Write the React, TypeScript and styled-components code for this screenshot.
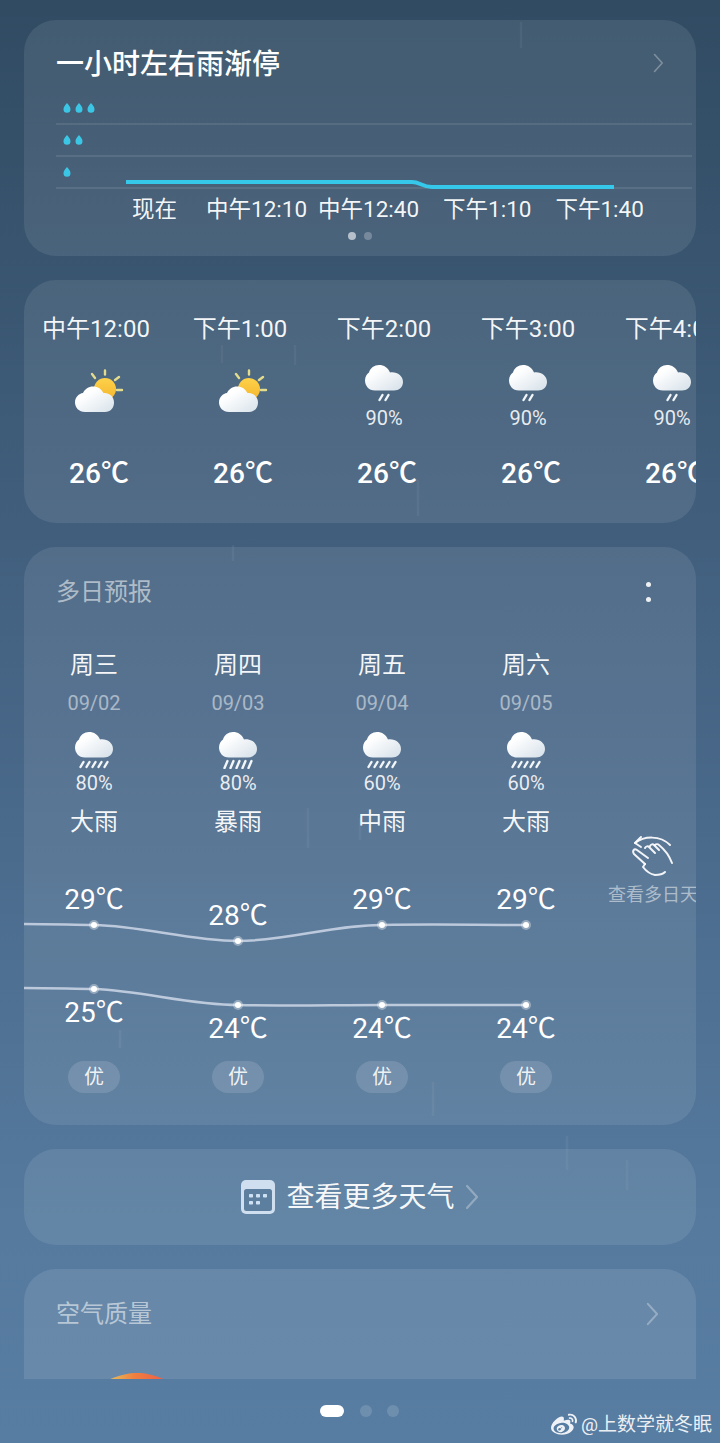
import React from 'react';
import styled, { createGlobalStyle } from 'styled-components';
import { FaWeibo } from 'react-icons/fa';

const GlobalStyle = createGlobalStyle`
  html, body {
    margin: 0;
    padding: 0;
    background: #34506a;
  }
  body {
    font-family: Roboto, "Noto Sans CJK SC", sans-serif;
    color: #fff;
  }
`;

const Page = styled.div`
  position: relative;
  width: 720px;
  height: 1443px;
  overflow: hidden;
  box-sizing: border-box;
  padding-top: 20px;
  display: flex;
  flex-direction: column;
  align-items: center;
  gap: 24px;
  background: linear-gradient(180deg, #304b62 0%, #456383 45%, #557a9e 85%, #587da2 100%);
`;

const Rain = styled.svg`
  position: absolute;
  inset: 0;
  pointer-events: none;
`;

const Card = styled.section`
  position: relative;
  width: 672px;
  flex: none;
  overflow: hidden;
  border-radius: 32px;
  background: rgba(255, 255, 255, 0.09);
`;

const NowCard = styled(Card)`
  height: 236px;
`;

const NowHeader = styled.div`
  display: flex;
  align-items: center;
  justify-content: space-between;
  height: 40px;
  padding: 23px 32px 0;
`;

const NowTitle = styled.h2`
  margin: 3px 0 0;
  font-size: 28px;
  line-height: 40px;
  font-weight: 500;
  color: #fff;
`;

const MinuteChart = styled.svg`
  display: block;
  margin: 17px 0 0 32px;
`;

const MinuteLabels = styled.div`
  display: flex;
  height: 34px;
  margin-top: 2px;
  padding-left: 108px;
`;

const MinuteLabel = styled.span<{ $gap: number }>`
  margin-left: ${(p) => p.$gap}px;
  font-size: 22.5px;
  line-height: 34px;
  white-space: nowrap;
  color: rgba(255, 255, 255, 0.95);
`;

const PageDots = styled.div`
  display: flex;
  justify-content: center;
  gap: 8px;
  margin-top: 6px;
`;

const PageDot = styled.i<{ $on?: boolean }>`
  width: 8px;
  height: 8px;
  border-radius: 50%;
  background: rgba(255, 255, 255, ${(p) => (p.$on ? 0.6 : 0.25)});
`;

const HourCard = styled(Card)`
  height: 243px;
  display: flex;
`;

const HourColumn = styled.div`
  flex: none;
  width: 144px;
  display: flex;
  flex-direction: column;
  align-items: center;
  padding-top: 32px;
`;

const HourLabel = styled.span`
  font-size: 24px;
  line-height: 34px;
  white-space: nowrap;
  color: rgba(255, 255, 255, 0.95);
`;

const HourIconSlot = styled.div`
  height: 86px;
  margin-top: 19px;
  display: flex;
  flex-direction: column;
  align-items: center;
`;

const SunSlot = styled.div`
  margin: 4px 0 0 8px;
`;

const Percent = styled.span<{ $top: number }>`
  margin-top: ${(p) => p.$top}px;
  font-size: 20px;
  line-height: 24px;
  color: rgba(255, 255, 255, 0.88);
`;

const HourTemp = styled.span`
  margin-left: 6px;
  margin-top: 3px;
  font-size: 28px;
  line-height: 40px;
  font-weight: 500;
  white-space: nowrap;
`;

const DailyCard = styled(Card)`
  height: 578px;
`;

const DailyHeader = styled.div`
  display: flex;
  justify-content: space-between;
  align-items: center;
  height: 34px;
  padding: 28px 32px 0;
`;

const MutedTitle = styled.h3`
  margin: 0;
  font-size: 24px;
  line-height: 34px;
  font-weight: 400;
  color: rgba(255, 255, 255, 0.55);
`;

const MoreDots = styled.div`
  display: flex;
  flex-direction: column;
  gap: 10px;
  margin-right: 13px;

  i {
    width: 5px;
    height: 5px;
    border-radius: 50%;
    background: rgba(255, 255, 255, 0.9);
  }
`;

const DailyBody = styled.div`
  display: flex;
  margin: 24px 0 0 -2px;
`;

const DayColumn = styled.div`
  flex: none;
  width: 144px;
  display: flex;
  flex-direction: column;
  align-items: center;
`;

const Weekday = styled.span`
  margin-top: 15px;
  font-size: 24px;
  line-height: 34px;
  color: rgba(255, 255, 255, 0.95);
`;

const DateText = styled.span`
  margin-top: 4px;
  font-size: 20px;
  line-height: 34px;
  color: rgba(255, 255, 255, 0.5);
`;

const DayIcon = styled.div`
  margin-top: 12px;
  display: flex;
  flex-direction: column;
  align-items: center;
  height: 65px;
`;

const Condition = styled.span`
  margin-top: 8px;
  font-size: 24px;
  line-height: 34px;
  color: rgba(255, 255, 255, 0.95);
`;

const TempValue = styled.span<{ $top: number }>`
  margin-top: ${(p) => p.$top}px;
  font-size: 28px;
  line-height: 34px;
  white-space: nowrap;
`;

const QualityPill = styled.span<{ $top: number }>`
  margin-top: ${(p) => p.$top}px;
  width: 52px;
  height: 32px;
  border-radius: 16px;
  background: rgba(255, 255, 255, 0.13);
  font-size: 20px;
  line-height: 32px;
  text-align: center;
  color: rgba(255, 255, 255, 0.9);
`;

const TempLines = styled.svg`
  position: absolute;
  inset: 0;
  pointer-events: none;
`;

const SwipeHint = styled.div`
  display: flex;
  flex-direction: column;
  align-items: flex-start;
  flex: none;
  width: 110px;
  padding: 202px 0 0 10px;

  svg {
    margin-left: 24px;
  }
`;

const HintText = styled.span`
  margin-top: 5px;
  font-size: 18px;
  line-height: 26px;
  white-space: nowrap;
  color: rgba(255, 255, 255, 0.5);
`;

const MoreCard = styled(Card)`
  height: 96px;
  display: flex;
  align-items: center;
  justify-content: center;
  gap: 12px;
`;

const MoreText = styled.span`
  margin: 2px -2px 0 -1px;
  font-size: 28px;
  line-height: 40px;
  color: rgba(255, 255, 255, 0.95);
`;

const AirCard = styled(Card)`
  height: 110px;
  border-radius: 32px 32px 0 0;
  background: rgba(255, 255, 255, 0.1);
`;

const AirHeader = styled.div`
  display: flex;
  justify-content: space-between;
  align-items: center;
  padding: 28px 37px 0 32px;
`;

const AirGauge = styled.svg`
  display: block;
  margin: 42px 0 0 84px;
`;

const Footer = styled.footer`
  position: absolute;
  left: 0;
  right: 0;
  top: 1405px;
  display: flex;
  gap: 15.5px;
  padding-left: 320px;
  align-items: center;
`;

const FooterPill = styled.i`
  width: 24px;
  height: 12px;
  border-radius: 6px;
  background: #fff;
`;

const FooterDot = styled.i`
  width: 12px;
  height: 12px;
  border-radius: 50%;
  background: rgba(255, 255, 255, 0.14);
`;

const Watermark = styled.div`
  position: absolute;
  right: 8px;
  bottom: 5px;
  display: flex;
  align-items: center;
  gap: 4px;
  font-size: 19px;
  line-height: 26px;
  color: rgba(255, 255, 255, 0.9);
`;

const Chevron = ({ size = 26, color = 'rgba(255,255,255,0.32)' }: { size?: number; color?: string }) => (
  <svg width={(size * 14) / 26} height={size} viewBox="0 0 14 26" fill="none">
    <path d="M2 2l10 11L2 24" stroke={color} strokeWidth="2.2" strokeLinecap="round" strokeLinejoin="round" />
  </svg>
);

const SunCloud = () => (
  <svg width="50" height="44" viewBox="0 0 50 44">
    <defs>
      <linearGradient id="sunFill" x1="0" y1="0" x2="0" y2="1">
        <stop offset="0" stopColor="#fdd24a" />
        <stop offset="1" stopColor="#f5b52e" />
      </linearGradient>
      <linearGradient id="cloudFillSun" x1="0" y1="0" x2="1" y2="1">
        <stop offset="0.3" stopColor="#ffffff" />
        <stop offset="1" stopColor="#d7e2ea" />
      </linearGradient>
    </defs>
    <g stroke="#e3dc8c" strokeWidth="2.4" strokeLinecap="round">
      <path d="M30 1.5v4M17 5l3 4M44 8l-4 3M47 21h-5" />
    </g>
    <circle cx="30" cy="20" r="11" fill="url(#sunFill)" />
    <path
      d="M10 43C4 43 0 38.500 0 33.500 0 28 4 24.600 8 24c2-4 5.500-6.500 10-6.500 5 0 8.500 2.700 10.500 6.600 5-.6 10.500 2.900 10.500 9.400 0 5.500-3.500 9.500-9 9.500z"
      fill="url(#cloudFillSun)"
    />
  </svg>
);

const RainCloud = ({ streaks, long }: { streaks: number; long?: boolean }) => {
  const start = 20 - ((streaks - 1) * 6) / 2;
  return (
    <svg width="40" height="37" viewBox="0 0 40 37">
      <defs>
        <linearGradient id="cloudFillRain" x1="0" y1="0" x2="1" y2="1">
          <stop offset="0.25" stopColor="#ffffff" />
          <stop offset="1" stopColor="#d5e0e9" />
        </linearGradient>
      </defs>
      <path
        d="M11 25.500C4.500 25.500 1 20.500 1 15.500 1 11.500 3 9 5 7.500 6 3 10.500 0 15 0c5 0 9 2.500 11 7.500C33 6.500 39 11 39 17c0 5-4 8.500-9 8.500z"
        fill="url(#cloudFillRain)"
      />
      <g stroke="#f2f6f9" strokeWidth="2.4" strokeLinecap="round">
        {Array.from({ length: streaks }, (_, i) => {
          const x = start + i * 6;
          return <line key={i} x1={x + 1.5} y1={long ? 29 : 30} x2={x - 1.5} y2={long ? 36 : 35} />;
        })}
      </g>
    </svg>
  );
};

const Drop = ({ x, y }: { x: number; y: number }) => (
  <path
    transform={`translate(${x} ${y})`}
    d="M0-5C1.700-3 3.500-1 3.500 1.200a3.500 3.500 0 0 1-7 0C-3.500-1-1.700-3 0-5z"
    fill="#3cc6e6"
  />
);

const HandIcon = () => (
  <svg width="42" height="42" viewBox="0 0 42 42" fill="none" stroke="rgba(255,255,255,0.92)" strokeWidth="2" strokeLinecap="round" strokeLinejoin="round">
    <path d="M3 8C12 1 28 0 38 10" />
    <path d="M9 2L3 8l6 4" />
    <path d="M16 23L5 15c-3-2-5 1-3 4l11 10" />
    <path d="M13 29l-2 3c3 4 7 7 12 8 4 0 8-1 10-3" />
    <path d="M13 13c1-2 3-2 4-1l6 6" />
    <path d="M18 11c1-2 3-2 4-1l5 5" />
    <path d="M23 10c1-1 3-1 4 0 5 4 10 10 13 18" />
  </svg>
);

const CalendarIcon = () => (
  <svg width="34" height="34" viewBox="0 0 34 34">
    <rect x="0" y="0" width="34" height="34" rx="5" fill="#cfdfef" />
    <rect x="3" y="9" width="28" height="22" rx="2.500" fill="#5d7f9f" />
    <g fill="#cfe2f3">
      <rect x="8" y="14" width="4" height="3.500" rx="0.800" />
      <rect x="15" y="14" width="4" height="3.500" rx="0.800" />
      <rect x="22" y="14" width="4" height="3.500" rx="0.800" />
      <rect x="8" y="21" width="4" height="3.500" rx="0.800" />
      <rect x="15" y="21" width="4" height="3.500" rx="0.800" />
    </g>
  </svg>
);

const minuteLabels = [
  { text: '现在', gap: 0 },
  { text: '中午12:10', gap: 29 },
  { text: '中午12:40', gap: 11 },
  { text: '下午1:10', gap: 24 },
  { text: '下午1:40', gap: 24 },
];

const hours = [
  { label: '中午12:00', sunny: true },
  { label: '下午1:00', sunny: true },
  { label: '下午2:00', sunny: false },
  { label: '下午3:00', sunny: false },
  { label: '下午4:00', sunny: false },
];

const days = [
  { week: '周三', date: '09/02', pop: '80%', cond: '大雨', high: '29℃', highY: 0, low: '25℃', lowY: 0, streaks: 5, long: false },
  { week: '周四', date: '09/03', pop: '80%', cond: '暴雨', high: '28℃', highY: 16, low: '24℃', lowY: 16, streaks: 5, long: true },
  { week: '周五', date: '09/04', pop: '60%', cond: '中雨', high: '29℃', highY: 0, low: '24℃', lowY: 16, streaks: 5, long: false },
  { week: '周六', date: '09/05', pop: '60%', cond: '大雨', high: '29℃', highY: 0, low: '24℃', lowY: 16, streaks: 5, long: false },
];

const highPoints = [
  [70, 378],
  [214, 394],
  [358, 378],
  [502, 378],
];
const lowPoints = [
  [70, 442],
  [214, 458],
  [358, 458],
  [502, 458],
];

const streaks = [
  [521, 22, 26],
  [295, 345, 20],
  [222, 345, 18],
  [418, 480, 36],
  [233, 545, 16],
  [308, 808, 40],
  [360, 818, 22],
  [433, 1082, 34],
  [567, 1136, 34],
  [627, 1160, 30],
  [120, 1030, 18],
];

const App = () => (
  <Page>
    <GlobalStyle />
    <Rain width="720" height="1443" viewBox="0 0 720 1443">
      {streaks.map(([x, y, h]) => (
        <line key={`${x}-${y}`} x1={x} y1={y} x2={x} y2={y + h} stroke="rgba(255,255,255,0.05)" strokeWidth="2.500" />
      ))}
    </Rain>

    <NowCard>
      <NowHeader>
        <NowTitle>一小时左右雨渐停</NowTitle>
        <Chevron size={20} color="rgba(255,255,255,0.3)" />
      </NowHeader>
      <MinuteChart width="640" height="90" viewBox="0 0 640 90">
        <g stroke="rgba(255,255,255,0.12)" strokeWidth="1.500">
          <line x1="0" y1="24" x2="636" y2="24" />
          <line x1="0" y1="56" x2="636" y2="56" />
          <line x1="0" y1="88" x2="636" y2="88" />
        </g>
        <Drop x={11} y={8} />
        <Drop x={23} y={8} />
        <Drop x={35} y={8} />
        <Drop x={11} y={40} />
        <Drop x={23} y={40} />
        <Drop x={11} y={72} />
        <path d="M70 82H356C364 82 366 87 376 87H558" fill="none" stroke="#35c8ea" strokeWidth="4" />
      </MinuteChart>
      <MinuteLabels>
        {minuteLabels.map((l) => (
          <MinuteLabel key={l.text} $gap={l.gap}>
            {l.text}
          </MinuteLabel>
        ))}
      </MinuteLabels>
      <PageDots>
        <PageDot $on />
        <PageDot />
      </PageDots>
    </NowCard>

    <HourCard>
      {hours.map((h) => (
        <HourColumn key={h.label}>
          <HourLabel>{h.label}</HourLabel>
          <HourIconSlot>
            {h.sunny ? (
              <SunSlot>
                <SunCloud />
              </SunSlot>
            ) : (
              <>
                <RainCloud streaks={2} />
                <Percent $top={4}>90%</Percent>
              </>
            )}
          </HourIconSlot>
          <HourTemp>26℃</HourTemp>
        </HourColumn>
      ))}
    </HourCard>

    <DailyCard>
      <TempLines width="672" height="578" viewBox="0 0 672 578" fill="none">
        <path
          d="M0 377C30 377 50 378 70 378C120 379 165 394 214 394C263 394 308 378 358 378C410 377 450 378 502 378"
          stroke="rgba(205,215,232,0.85)"
          strokeWidth="2.500"
        />
        <path
          d="M0 441C30 441 50 442 70 442C120 444 165 458 214 458C263 459 308 458 358 458H502"
          stroke="rgba(205,215,232,0.85)"
          strokeWidth="2.500"
        />
        {[...highPoints, ...lowPoints].map(([x, y]) => (
          <g key={`${x}-${y}`}>
            <circle cx={x} cy={y} r="5" fill="rgba(255,255,255,0.35)" />
            <circle cx={x} cy={y} r="3" fill="#fff" />
          </g>
        ))}
      </TempLines>
      <DailyHeader>
        <MutedTitle>多日预报</MutedTitle>
        <MoreDots>
          <i />
          <i />
        </MoreDots>
      </DailyHeader>
      <DailyBody>
        {days.map((d) => (
          <DayColumn key={d.week}>
            <Weekday>{d.week}</Weekday>
            <DateText>{d.date}</DateText>
            <DayIcon>
              <RainCloud streaks={d.streaks} long={d.long} />
              <Percent $top={2}>{d.pop}</Percent>
            </DayIcon>
            <Condition>{d.cond}</Condition>
            <TempValue $top={44 + d.highY}>{d.high}</TempValue>
            <TempValue $top={79 + d.lowY - d.highY}>{d.low}</TempValue>
            <QualityPill $top={31 - d.lowY}>优</QualityPill>
          </DayColumn>
        ))}
        <SwipeHint>
          <HandIcon />
          <HintText>查看多日天气</HintText>
        </SwipeHint>
      </DailyBody>
    </DailyCard>

    <MoreCard>
      <CalendarIcon />
      <MoreText>查看更多天气</MoreText>
      <Chevron size={26} color="rgba(255,255,255,0.3)" />
    </MoreCard>

    <AirCard>
      <AirHeader>
        <MutedTitle>空气质量</MutedTitle>
        <Chevron size={24} color="rgba(255,255,255,0.3)" />
      </AirHeader>
      <AirGauge width="58" height="7" viewBox="0 0 58 7">
        <defs>
          <linearGradient id="gaugeFill" x1="0" y1="0" x2="1" y2="0">
            <stop offset="0" stopColor="#e7c25e" />
            <stop offset="0.45" stopColor="#f0803f" />
            <stop offset="1" stopColor="#ee5c46" />
          </linearGradient>
        </defs>
        <path d="M0 7C12 2 20 0 29 0S46 2 58 7z" fill="url(#gaugeFill)" />
      </AirGauge>
    </AirCard>

    <Footer>
      <FooterPill />
      <FooterDot />
      <FooterDot />
    </Footer>
    <Watermark>
      <FaWeibo size={26} />
      <span>@上数学就冬眠</span>
    </Watermark>
  </Page>
);

export default App;
